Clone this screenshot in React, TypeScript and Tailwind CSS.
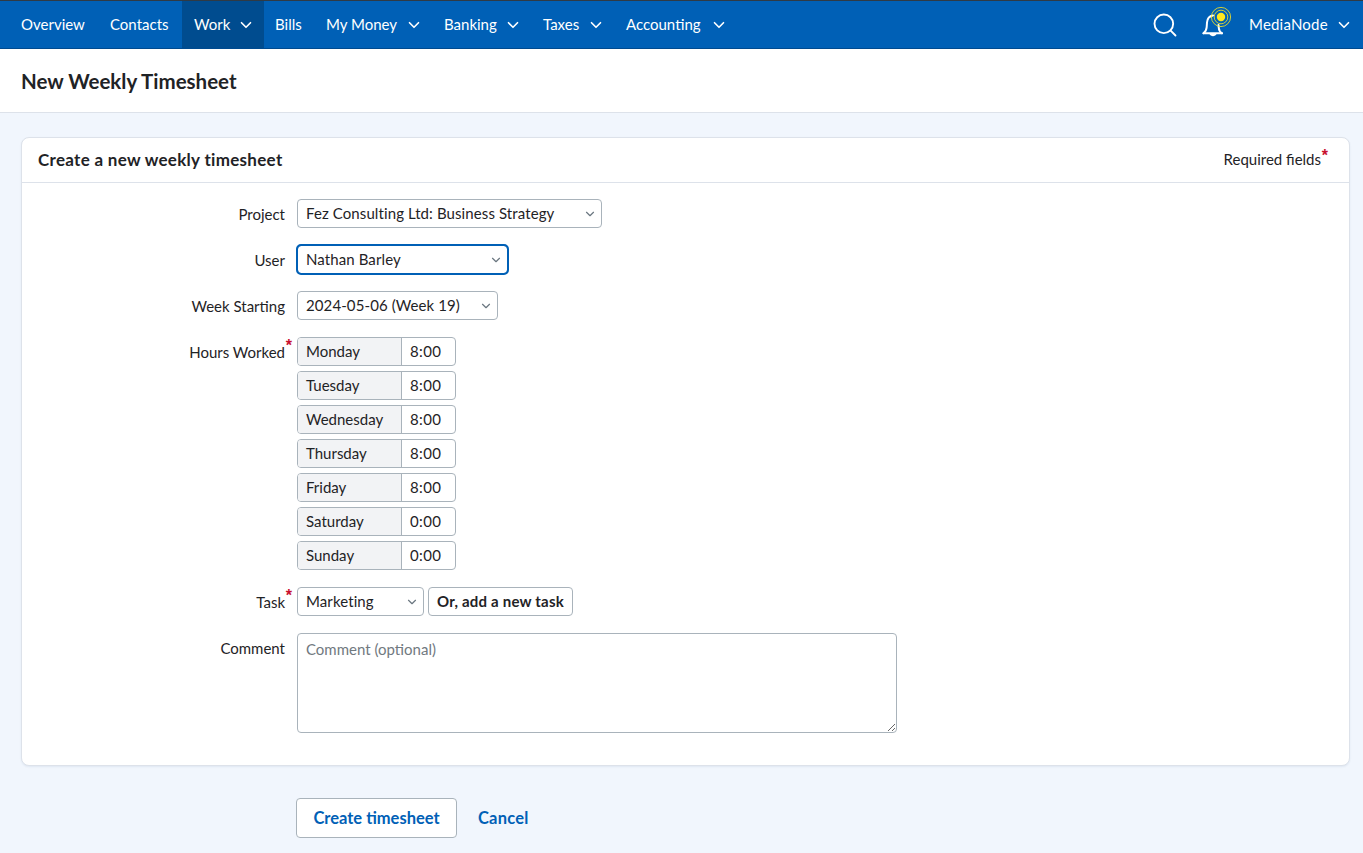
import { ChevronDown, Search } from "lucide-react";

const navItems = [
  { label: "Overview", cls: "w-[89px] pl-3", menu: false, active: false },
  { label: "Contacts", cls: "w-[84px] pl-3", menu: false, active: false },
  { label: "Work", cls: "w-[82px] pl-3", menu: true, active: true },
  { label: "Bills", cls: "w-[50px] pl-[11px]", menu: false, active: false },
  { label: "My Money", cls: "w-[118px] pl-3", menu: true, active: false },
  { label: "Banking", cls: "w-[99px] pl-3", menu: true, active: false },
  { label: "Taxes", cls: "w-[83px] pl-3", menu: true, active: false },
  { label: "Accounting", cls: "w-[123px] pl-3", menu: true, active: false },
];

const days = [
  ["Monday", "8:00"],
  ["Tuesday", "8:00"],
  ["Wednesday", "8:00"],
  ["Thursday", "8:00"],
  ["Friday", "8:00"],
  ["Saturday", "0:00"],
  ["Sunday", "0:00"],
];

const Star = ({ top = "-top-[4px]" }: { top?: string }) => (
  <span className={`absolute -right-[7px] font-['Liberation_Sans',sans-serif] text-[16px] font-bold leading-none text-[#c8102e] ${top}`}>*</span>
);

const Label = ({ text, required }: { text: string; required?: boolean }) => (
  <div className="flex w-[263px] shrink-0 justify-end pt-[5px] text-[15px] leading-[20px] text-[#1f2326]">
    <span className="relative">
      {text}
      {required && <Star />}
    </span>
  </div>
);

const Select = ({ value, width, focus }: { value: string; width: string; focus?: boolean }) => (
  <div
    className={`flex h-[29px] items-center justify-between rounded-[4px] bg-white pl-2 pr-[4px] text-[15px] tracking-[0.1px] text-[#1f2326] ${width} ${
      focus ? "outline-2 -outline-offset-1 outline-[#0060b6] border border-[#0060b6]" : "border border-[#a9b3bb]"
    }`}
  >
    <span className="whitespace-nowrap">{value}</span>
    <ChevronDown size={14} strokeWidth={2} className="text-[#6b7780]" />
  </div>
);

const Bell = () => (
  <svg width="34" height="34" viewBox="0 0 34 34" fill="none" className="block">
    <path
      d="M3.500 30.300c2-1.500 3-3.500 3.200-6.300l.3-4.500c.3-4 2.500-6.500 6-7M18.500 22l.3 3c.2 2.500 1.300 4.200 3.200 5.300"
      stroke="#fff"
      strokeWidth="2"
      strokeLinecap="round"
      strokeLinejoin="round"
    />
    <path d="M3.500 30.300h18.500" stroke="#fff" strokeWidth="2" strokeLinecap="round" />
    <path d="M9.500 31c.6 1.300 1.900 2.200 3.500 2.200s2.900-.9 3.500-2.200z" fill="#fff" />
    <circle cx="21" cy="14" r="4.200" fill="#ffe81f" />
    <circle cx="21" cy="14" r="6.800" stroke="#ffe81f" strokeWidth="0.800" />
    <circle cx="21" cy="14" r="9.600" stroke="#ffe81f" strokeWidth="0.800" />
  </svg>
);

export default function App() {
  return (
    <div className="min-h-[853px] overflow-hidden bg-[#f1f6fd] font-['Lato','Liberation_Sans',sans-serif]">
      <nav className="flex h-[49px] items-stretch justify-between border-t border-b border-t-[#2f3a45] border-b-[#004a8f] bg-[#0060b6] text-[15px] text-white">
        <div className="flex pl-[9px]">
          {navItems.map((item) => (
            <div
              key={item.label}
              className={`flex items-center justify-between ${item.menu ? "pr-[9px]" : "pr-3"} ${item.cls} ${item.active ? "bg-[#004c8f]" : ""}`}
            >
              <span className="whitespace-nowrap">{item.label}</span>
              {item.menu && <ChevronDown size={18} strokeWidth={2.200} />}
            </div>
          ))}
        </div>
        <div className="flex items-center pr-[10px]">
          <Search size={28} strokeWidth={1.600} className="mr-[21px]" />
          <div className="mr-[15px] -mt-[9px]">
            <Bell />
          </div>
          <span className="w-[79px] tracking-[0.2px]">MediaNode</span>
          <ChevronDown size={18} strokeWidth={2.200} className="ml-[7px]" />
        </div>
      </nav>

      <header className="flex h-[64px] items-center border-b border-[#dde2ea] bg-white pl-[21px]">
        <h1 className="mt-0.5 text-[20.500px] font-bold text-[#1f2326]">New Weekly Timesheet</h1>
      </header>

      <main className="pl-[21px] pr-[13px] pt-[24px]">
        <section className="h-[629px] rounded-[8px] border border-[#dde2ea] bg-white shadow-[0_1px_2px_rgba(30,60,110,0.08)]">
          <div className="flex h-[45px] items-center justify-between border-b border-[#dde2ea] pl-4 pr-[28px]">
            <h2 className="text-[17px] font-bold tracking-[0.3px] text-[#1f2326]">Create a new weekly timesheet</h2>
            <span className="relative -mt-[3px] text-[15px] leading-[20px] text-[#1f2326]">
              Required fields
              <Star top="-top-[1px]" />
            </span>
          </div>

          <form className="flex flex-col pt-4">
            <div className="flex gap-3">
              <Label text="Project" />
              <Select value="Fez Consulting Ltd: Business Strategy" width="w-[305px]" />
            </div>
            <div className="mt-[17px] flex gap-3">
              <Label text="User" />
              <Select value="Nathan Barley" width="w-[211px]" focus />
            </div>
            <div className="mt-[17px] flex gap-3">
              <Label text="Week Starting" />
              <Select value="2024-05-06 (Week 19)" width="w-[201px]" />
            </div>
            <div className="mt-[17px] flex gap-3">
              <Label text="Hours Worked" required />
              <div className="flex flex-col gap-[5px]">
                {days.map(([day, hours]) => (
                  <div key={day} className="flex h-[29px] w-[159px] rounded-[4px] border border-[#a9b3bb] text-[15px] text-[#1f2326]">
                    <div className="flex w-[104px] items-center rounded-l-[3px] border-r border-[#a9b3bb] bg-[#f2f3f5] pl-2">{day}</div>
                    <div className="flex flex-1 items-center pl-2 tracking-[0.4px]">{hours}</div>
                  </div>
                ))}
              </div>
            </div>
            <div className="mt-[17px] flex gap-3">
              <Label text="Task" required />
              <div className="flex gap-1">
                <Select value="Marketing" width="w-[127px]" />
                <button type="button" className="h-[29px] w-[145px] rounded-[4px] border border-[#a9b3bb] bg-white text-[15px] font-bold tracking-[0.2px] text-[#1f2326]">
                  Or, add a new task
                </button>
              </div>
            </div>
            <div className="mt-[17px] flex gap-3">
              <Label text="Comment" />
              <textarea
                placeholder="Comment (optional)"
                className="h-[100px] w-[600px] rounded-[4px] border border-[#a9b3bb] px-2 py-[5px] text-[15px] leading-[20px] placeholder:text-[#71797f]"
              />
            </div>
          </form>
        </section>

        <div className="mt-[32px] flex items-center gap-[21px] pl-[275px]">
          <button type="button" className="h-[40px] w-[161px] rounded-[4px] border border-[#a9b3bb] bg-white text-[16.500px] font-bold text-[#0060b6]">
            Create timesheet
          </button>
          <a className="text-[16.500px] font-bold tracking-[0.2px] text-[#0060b6]">Cancel</a>
        </div>
      </main>
    </div>
  );
}
